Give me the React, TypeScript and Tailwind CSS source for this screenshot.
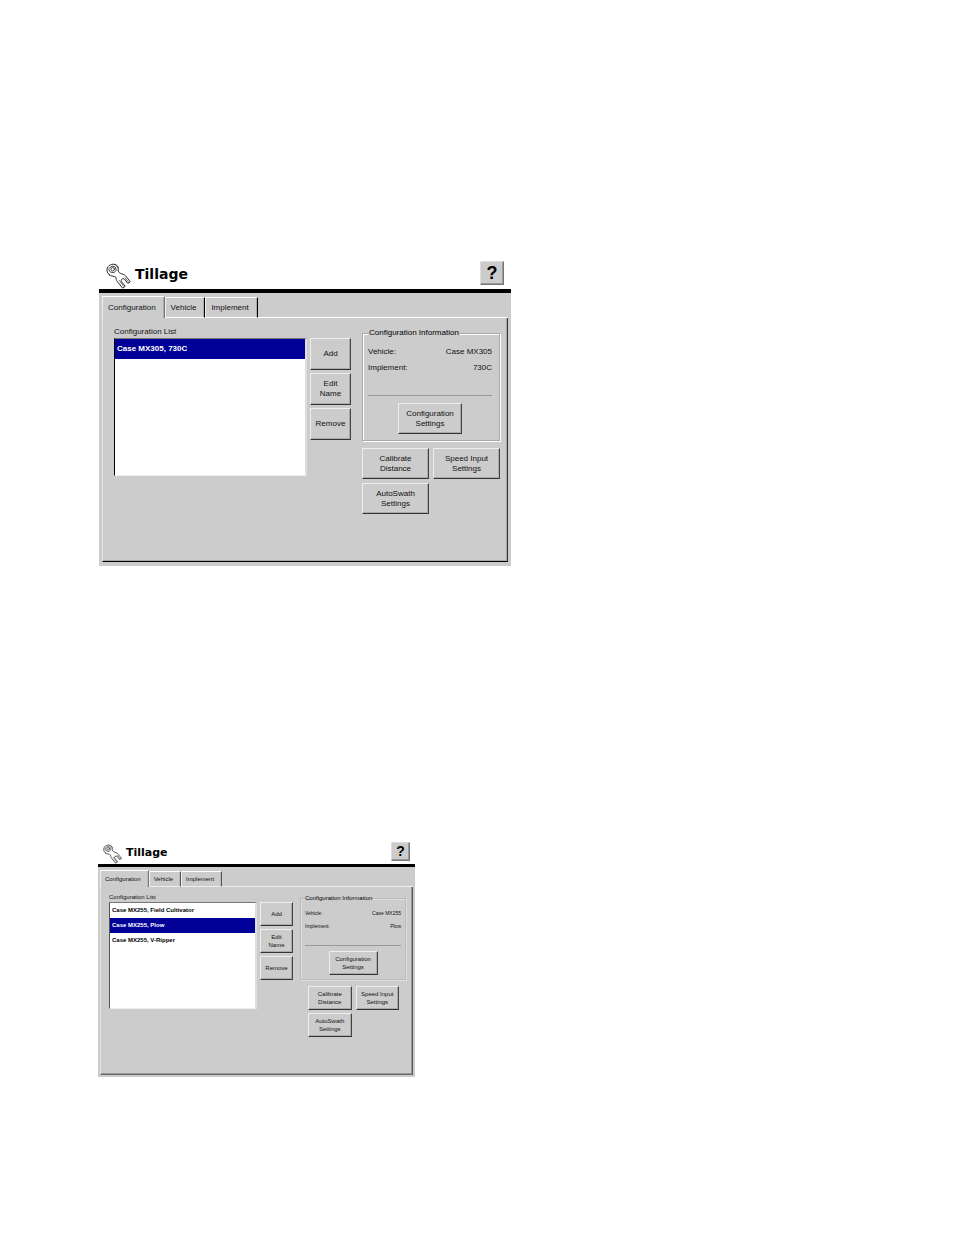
import { useState } from "react";
import clsx from "clsx";

type Size = "lg" | "sm";

type ScreenProps = {
  size: Size;
  items: string[];
  initial: number;
  vehicle: string;
  implement: string;
};

const TABS = ["Configuration", "Vehicle", "Implement"];

const WrenchIcon = ({ className }: { className: string }) => (
  <svg
    viewBox="0 0 78 80"
    className={className}
    fill="none"
    stroke="#222"
    strokeWidth="3"
    strokeLinejoin="round"
    strokeLinecap="round"
    aria-hidden="true"
  >
    <path d="M10 36 C-1 28 1 10 14 5 C24 1 34 4 38 12 L38 24 C40 29 43 31 48 33 C56 34 60 38 64 43 L76 58 L68 63 L58 50 C52 46 45 51 48 57 L60 72 L52 78 L36 58 C32 53 31 48 31 44 C27 40 16 42 10 36 Z" />
    <path d="M11 15 L19 9 L29 12 L32 22 L25 30 L14 28 L9 21 Z" strokeWidth="2.5" />
    <circle cx="21" cy="19" r="5.5" strokeWidth="2.5" />
    <path d="M37 14 L31 8 M60 46 L71 60 M42 54 L55 72" strokeWidth="2" />
  </svg>
);

type BevelProps = {
  size: Size;
  className?: string;
  children: React.ReactNode;
};

const BevelButton: React.FC<BevelProps> = ({ size, className, children }) => (
  <button
    type="button"
    className={clsx(
      "flex items-center justify-center border border-t-[#eee] border-l-[#eee] border-r-[#444] border-b-[#333] bg-[#ccc] text-center whitespace-nowrap shadow-[inset_-1px_-1px_0_#aaa]",
      size === "lg" ? "leading-[10px]" : "leading-[8px]",
      className
    )}
  >
    {children}
  </button>
);

const TillageScreen: React.FC<ScreenProps> = ({
  size,
  items,
  initial,
  vehicle,
  implement,
}) => {
  const [tab, setTab] = useState(0);
  const [selected, setSelected] = useState(initial);
  const lg = size === "lg";

  return (
    <section
      className={clsx(
        "w-full text-[#111]",
        lg ? "ml-[99px] max-w-[412px] text-[8px]" : "ml-[98px] max-w-[317px] text-[6px]"
      )}
    >
      <header
        className={clsx(
          "flex items-start justify-between border-black bg-white",
          lg ? "h-8 border-b-4 px-[7px]" : "h-[25px] border-b-[3px] px-[5px]"
        )}
      >
        <div className="flex items-start gap-1 pt-0.5">
          <WrenchIcon className={lg ? "h-[26px] w-[25px]" : "h-5 w-[19px]"} />
          <h2
            className={clsx(
              "font-['DejaVu_Sans'] font-bold text-black",
              lg ? "text-[14px] leading-[22px]" : "text-[11px] leading-[18px]"
            )}
          >
            Tillage
          </h2>
        </div>
        <button
          type="button"
          aria-label="Help"
          className={clsx(
            "flex items-center justify-center border border-t-[#ddd] border-l-[#ddd] border-r-[#777] border-b-[#777] bg-[#ccc] font-bold text-black shadow-[inset_-1px_-1px_0_#999]",
            lg ? "size-6 text-[18px]" : "size-[19px] text-[14px]"
          )}
        >
          ?
        </button>
      </header>

      <div className={clsx("bg-[#ccc]", lg ? "px-[3px] pt-[3px] pb-1" : "px-0.5 pt-[3px] pb-0.5")}>
        <div role="tablist" className="flex items-end">
          {TABS.map((name, i) => (
            <button
              key={name}
              type="button"
              role="tab"
              aria-selected={tab === i}
              onClick={() => setTab(i)}
              className={clsx(
                "border-t border-r border-l border-t-white border-l-[#eee]",
                lg
                  ? "pr-2 pl-[5px] shadow-[inset_-1px_0_0_#aaa]"
                  : "pr-[7px] pl-1 shadow-[inset_-1px_0_0_#bbb]",
                tab === i
                  ? "border-r-[#777]"
                  : lg
                    ? "border-b border-r-black border-b-white"
                    : "border-b border-r-[#555] border-b-[#eee]",
                lg ? (tab === i ? "h-[22px]" : "h-[21px]") : tab === i ? "h-[17px]" : "h-4"
              )}
            >
              {name}
            </button>
          ))}
          <div className={clsx("flex-1 border-b", lg ? "border-white" : "border-[#eee]")} />
        </div>

        <div
          className={clsx(
            "flex border-r border-b border-l border-l-[#e4e4e4]",
            lg
              ? "border-r-[#333] border-b-black pt-[9px] pr-[7px] pb-[47px] pl-[11px] shadow-[inset_-1px_-1px_0_#aaa]"
              : "border-r-[#555] border-b-[#666] pt-[6px] pr-[6px] pb-[37px] pl-2 shadow-[inset_-1px_-1px_0_#999]"
          )}
        >
          <div className="min-w-0 flex-1">
            <h3 className={lg ? "h-[11px] leading-[10px]" : "h-[9px] leading-[8px]"}>
              Configuration List
            </h3>
            <ul
              className={clsx(
                "border-t border-r-2 border-b border-l border-t-[#777] border-r-[#ddd] border-b-[#eee] bg-white",
                lg ? "h-[138px] border-l-black" : "h-[107px] border-l-[#555]"
              )}
            >
              {items.map((item, i) => (
                <li key={item}>
                  <button
                    type="button"
                    aria-pressed={selected === i}
                    onClick={() => setSelected(i)}
                    className={clsx(
                      "block w-full px-0.5 text-left font-bold whitespace-nowrap",
                      lg ? "h-5" : "h-[15px]",
                      selected === i ? "bg-[#000099] text-white" : "text-black"
                    )}
                  >
                    {item}
                  </button>
                </li>
              ))}
            </ul>
          </div>

          <div
            className={clsx(
              "ml-[3px] flex flex-none flex-col gap-[3px]",
              lg ? "w-[41px] pt-[11px]" : "w-[33px] pt-[9px]"
            )}
          >
            <BevelButton size={size} className={lg ? "h-8" : "h-6"}>
              Add
            </BevelButton>
            <BevelButton size={size} className={lg ? "h-8" : "h-6"}>
              Edit
              <br />
              Name
            </BevelButton>
            <BevelButton size={size} className={lg ? "h-8" : "h-6"}>
              Remove
            </BevelButton>
          </div>

          <div
            className={clsx(
              "flex-none pt-px",
              lg ? "ml-[11px] w-[138px]" : "ml-[7px] w-[106px]"
            )}
          >
            <fieldset
              className={clsx(
                "min-w-0 border",
                lg
                  ? "h-[113px] border-[#aaa] pr-[7px] pl-[5px] shadow-[inset_1px_1px_0_#fff,1px_1px_0_#fff]"
                  : "h-[86px] border-[#bbb] px-1 shadow-[inset_1px_1px_0_#ddd,1px_1px_0_#ddd]"
              )}
            >
              <legend
                className={clsx(
                  "bg-[#ccc] whitespace-nowrap text-black",
                  lg ? "px-px leading-[10px]" : "leading-[8px]"
                )}
              >
                Configuration Information
              </legend>
              <dl
                className={clsx(
                  "grid grid-cols-[auto_1fr] content-start border-b border-[#999]",
                  lg
                    ? "h-[58px] gap-y-1 pt-2 leading-[12px]"
                    : "h-11 gap-y-[3px] pt-[6px] text-[5px] leading-[10px]"
                )}
              >
                <dt>Vehicle:</dt>
                <dd className="text-right">{vehicle}</dd>
                <dt>Implement:</dt>
                <dd className="text-right">{implement}</dd>
              </dl>
              <BevelButton
                size={size}
                className={
                  lg ? "mx-auto mt-[7px] h-[31px] w-16" : "mx-auto mt-[5px] h-6 w-[49px]"
                }
              >
                Configuration
                <br />
                Settings
              </BevelButton>
            </fieldset>

            <div
              className={clsx(
                "grid grid-cols-2",
                lg ? "mt-[7px] gap-1" : "mt-[6px] mr-[7px] ml-2 gap-x-1 gap-y-[3px]"
              )}
            >
              <BevelButton size={size} className={lg ? "h-[31px]" : "h-6"}>
                Calibrate
                <br />
                Distance
              </BevelButton>
              <BevelButton size={size} className={lg ? "h-[31px]" : "h-6"}>
                Speed Input
                <br />
                Settings
              </BevelButton>
              <BevelButton size={size} className={lg ? "h-[31px]" : "h-6"}>
                AutoSwath
                <br />
                Settings
              </BevelButton>
            </div>
          </div>
        </div>
      </div>
    </section>
  );
};

const App = () => {
  return (
    <main className="flex min-h-screen flex-col gap-[276px] bg-white pt-[261px] pb-16 font-['Liberation_Sans',Arial,sans-serif]">
      <TillageScreen
        size="lg"
        items={["Case MX305, 730C"]}
        initial={0}
        vehicle="Case MX305"
        implement="730C"
      />
      <TillageScreen
        size="sm"
        items={["Case MX255, Field Cultivator", "Case MX255, Plow", "Case MX255, V-Ripper"]}
        initial={1}
        vehicle="Case MX255"
        implement="Plow"
      />
    </main>
  );
};

export default App;
